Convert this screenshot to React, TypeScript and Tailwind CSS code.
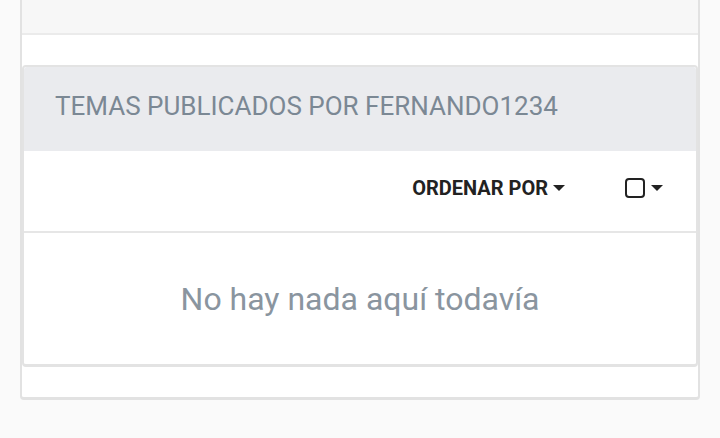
export default function App() {
  return (
    <div
      className="min-h-[438px] w-[720px] bg-[#fafafa]"
      style={{ fontFamily: "Roboto, 'Liberation Sans', sans-serif" }}
    >
      <div className="ml-[20px] w-[680px] rounded-b-[4px] border-x-2 border-b-[3px] border-[#e2e2e2] bg-white">
        <div className="h-[35px] border-b-2 border-[#ebebeb] bg-[#f7f7f7]" />
        <div className="h-[30px]" />
        <section className="rounded-[4px] border-x-2 border-t-2 border-b-[3px] border-[#e3e3e3] bg-white">
          <header className="flex h-[84px] items-center rounded-t-[3px] bg-[#eaebee] pb-[6px] pl-[31px]">
            <h2 className="text-[26px] font-normal uppercase leading-none text-[#7b8894]">
              Temas publicados por fernando1234
            </h2>
          </header>
          <div className="flex h-[82px] items-center justify-end border-b-2 border-[#e6e6e6] pb-[6px] pr-[33px]">
            <button className="flex items-center gap-[5px] text-[20px] font-bold uppercase leading-none text-[#222]">
              Ordenar por
              <Caret />
            </button>
            <button className="ml-[60px] flex items-center gap-[6px]">
              <span className="block h-[20px] w-[20px] rounded-[4px] border-2 border-[#222]" />
              <Caret />
            </button>
          </div>
          <div className="flex h-[131px] items-center justify-center">
            <p className="text-[32px] leading-none text-[#8a959f]">No hay nada aquí todavía</p>
          </div>
        </section>
        <div className="h-[30px]" />
      </div>
    </div>
  );
}

function Caret() {
  return (
    <svg width="12" height="6" viewBox="0 0 12 6" className="block">
      <path d="M0 0h12L6 6z" fill="#222" />
    </svg>
  );
}
